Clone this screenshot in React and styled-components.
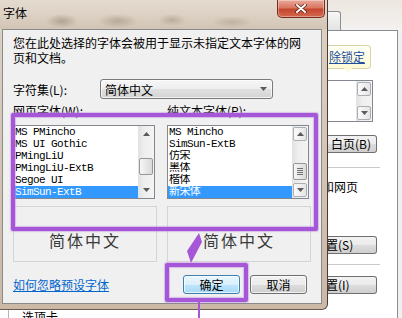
import styled, { createGlobalStyle } from "styled-components";

const GlobalStyle = createGlobalStyle`
  html, body {
    margin: 0;
    padding: 0;
  }
  body {
    font-family: "Noto Sans CJK SC", "Liberation Sans", sans-serif;
    font-size: 12px;
    color: #000;
  }
  * {
    box-sizing: border-box;
  }
`;

const Screen = styled.div`
  position: relative;
  width: 402px;
  height: 318px;
  overflow: hidden;
  display: flex;
  background: #f0f0f0;
`;

/* ---------- dialog ---------- */

const LeftColumn = styled.div`
  width: 328px;
  flex: none;
  display: flex;
  flex-direction: column;
  position: relative;
  z-index: 1;
  background: #fff;
`;

const Dialog = styled.div`
  height: 310px;
  flex: none;
  display: flex;
  flex-direction: column;
  background: linear-gradient(to bottom, #ddd2c5, #cbb8a6);
  border-right: 1px solid #4a3c33;
  border-bottom: 1px solid #6d5a4c;
  border-bottom-right-radius: 6px;
`;

const TitleBar = styled.div`
  height: 29px;
  flex: none;
  display: flex;
  align-items: flex-start;
  justify-content: space-between;
  padding: 0 2px 0 3px;
  background:
    radial-gradient(ellipse 16px 7px at 62px 21px, rgba(110, 88, 66, 0.35), transparent),
    radial-gradient(ellipse 20px 7px at 118px 21px, rgba(110, 88, 66, 0.3), transparent),
    radial-gradient(ellipse 14px 6px at 172px 20px, rgba(110, 88, 66, 0.28), transparent),
    radial-gradient(ellipse 20px 6px at 232px 22px, rgba(110, 88, 66, 0.22), transparent),
    linear-gradient(to bottom, #e4dbd0 0%, #dbcfc1 60%, #d2c4b4 100%);
`;

const Title = styled.span`
  margin-top: 6px;
  line-height: 14px;
`;

const CloseButton = styled.div`
  width: 48px;
  height: 18px;
  display: flex;
  align-items: center;
  justify-content: center;
  border: 1px solid #7a2a1c;
  border-top: none;
  border-radius: 0 0 5px 5px;
  background: linear-gradient(
    to bottom,
    #eaa999 0%,
    #d97762 45%,
    #c4462e 55%,
    #d3694f 100%
  );
  box-shadow: inset 0 0 0 1px rgba(255, 255, 255, 0.35);
`;

const FrameBody = styled.div`
  flex: 1;
  display: flex;
  padding: 0 5px 5px 2px;
`;

const Client = styled.div`
  flex: 1;
  display: flex;
  flex-direction: column;
  padding: 5px 10px 0 10px;
  background: #f0f0f0;
  border: 1px solid #8a8a8a;
`;

const Description = styled.p`
  margin: 0;
  line-height: 15px;
`;

const CharsetRow = styled.div`
  margin-top: 14px;
  height: 20px;
  display: flex;
  align-items: center;
`;

const CharsetLabel = styled.span`
  width: 87px;
  flex: none;
`;

const Combo = styled.div`
  width: 173px;
  height: 20px;
  display: flex;
  align-items: center;
  justify-content: space-between;
  padding: 0 5px 0 4px;
  border: 1px solid #7a7a7a;
  border-radius: 3px;
  background: linear-gradient(
    to bottom,
    #f6f6f6 0%,
    #eeeeee 50%,
    #e0e0e0 50%,
    #d4d4d4 100%
  );
  box-shadow: inset 0 0 0 1px rgba(255, 255, 255, 0.7);
`;

const FontGrid = styled.div`
  display: grid;
  grid-template-columns: 144px 144px;
  column-gap: 10px;
`;

const FieldLabel = styled.span`
  margin-top: 5px;
  height: 14px;
  line-height: 14px;
`;

const ListBox = styled.div`
  margin-top: 7px;
  width: 142px;
  height: 74px;
  display: flex;
  background: #fff;
  border: 1px solid #828790;
`;

const Items = styled.div`
  flex: 1;
  min-width: 0;
  display: flex;
  flex-direction: column;
`;

const Item = styled.div`
  height: 12px;
  line-height: 12px;
  padding-left: 1px;
  white-space: nowrap;
  overflow: hidden;
  font-family: "Liberation Mono", "Noto Sans CJK SC", monospace;
  font-size: 11px;
  letter-spacing: -0.6px;
  color: ${(p) => (p.$selected ? "#fff" : "#000")};
  background: ${(p) => (p.$selected ? "#3399ff" : "transparent")};
`;

const ScrollBar = styled.div`
  width: 16px;
  flex: none;
  display: flex;
  flex-direction: column;
  background: linear-gradient(to right, #e2e2e2, #eeeeee 40%, #f4f4f4);
`;

const ScrollButton = styled.div`
  height: 14px;
  margin: 1px;
  flex: none;
  display: flex;
  align-items: center;
  justify-content: center;
  border: 1px solid ${(p) => (p.$framed ? "#a9afb5" : "transparent")};
  border-radius: 2px;
  background: ${(p) =>
    p.$framed ? "linear-gradient(to right, #fbfbfb, #e4e4e4)" : "transparent"};
`;

const Track = styled.div`
  flex: 1;
  display: flex;
  flex-direction: column;
`;

const Thumb = styled.div`
  margin: ${(p) => p.$offset}px 1px 0;
  height: ${(p) => p.$size}px;
  display: flex;
  flex-direction: column;
  align-items: center;
  justify-content: center;
  gap: 1px;
  border: 1px solid #979797;
  border-radius: 2px;
  background: linear-gradient(to right, #f6f6f6, #dadada);
`;

const Grip = styled.span`
  width: 6px;
  height: 1px;
  background: #6f6f6f;
`;

const Preview = styled.div`
  margin-top: 7px;
  height: 56px;
  padding-top: 23px;
  text-align: center;
  line-height: 20px;
  font-size: 16px;
  letter-spacing: 2px;
  color: #3a3a3a;
  border: 1px solid #d4d4d4;
`;

const BottomRow = styled.div`
  margin-top: 13px;
  height: 19px;
  display: flex;
  align-items: center;
  justify-content: space-between;
  padding-right: 4px;
`;

const HelpLink = styled.a`
  color: #0066cc;
  text-decoration: underline;
  line-height: 14px;
`;

const ButtonGroup = styled.div`
  display: flex;
  gap: 10px;
`;

const Button = styled.div`
  width: 57px;
  height: 19px;
  display: flex;
  align-items: center;
  justify-content: center;
  border: 1px solid ${(p) => (p.$default ? "#3c7fb1" : "#707070")};
  border-radius: 3px;
  background: ${(p) =>
    p.$default
      ? "linear-gradient(to bottom, #eaf6fd 0%, #d9f0fc 50%, #bee6fd 50%, #a7d9f5 100%)"
      : "linear-gradient(to bottom, #f2f2f2 0%, #ebebeb 50%, #dddddd 50%, #cfcfcf 100%)"};
  box-shadow: inset 0 0 0 1px rgba(255, 255, 255, 0.7);
`;

const UnderStrip = styled.div`
  flex: 1;
  padding-left: 8px;
  overflow: hidden;
  background: #fff;
`;

const GroupEdge = styled.div`
  height: 100%;
  padding-left: 13px;
  line-height: 14px;
  border-left: 1px solid #b5b5b5;
`;

/* ---------- window behind the dialog ---------- */

const SidePane = styled.div`
  flex: 1;
  display: flex;
  flex-direction: column;
  overflow: hidden;
  background: #f0f0f0;
`;

const TabStrip = styled.div`
  height: 30px;
  flex: none;
  display: flex;
  align-items: flex-end;
  background: linear-gradient(to bottom, #ece6df, #f3f2f0);
`;

const Tab = styled.div`
  width: 13px;
  height: 19px;
  border: 1px solid #8e8f8f;
  border-left: none;
  border-bottom: none;
  border-radius: 0 3px 0 0;
  background: linear-gradient(to bottom, #f7f7f7, #e3e3e3);
`;

const TabPanel = styled.div`
  flex: 1;
  margin-right: 4px;
  display: flex;
  flex-direction: column;
  align-items: flex-start;
  background: #fff;
  border-top: 1px solid #898c95;
  border-right: 1px solid #898c95;
`;

const Balloon = styled.div`
  position: relative;
  margin-top: 14px;
  width: 43px;
  height: 24px;
  padding-left: 1px;
  line-height: 22px;
  border: 1px solid #d8d4a8;
  border-left: none;
  border-radius: 0 4px 4px 0;
  background: linear-gradient(to bottom, #fffff6, #fcfad6);

  &::after {
    content: "";
    position: absolute;
    left: 16px;
    bottom: -5px;
    border-left: 4px solid transparent;
    border-right: 4px solid transparent;
    border-top: 5px solid #fcfad6;
  }
`;

const UnlockLink = styled.span`
  color: #1f4f9e;
  text-decoration: underline;
`;

const SideList = styled.div`
  margin-top: 11px;
  width: 45px;
  height: 42px;
  display: flex;
  justify-content: flex-end;
  border: 1px solid #828790;
  border-left: none;
`;

const SideButton = styled.div`
  margin-top: ${(p) => p.$gap}px;
  width: 49px;
  height: 18px;
  padding-left: 3px;
  line-height: 16px;
  white-space: nowrap;
  overflow: hidden;
  text-indent: ${(p) => p.$cut || 0}px;
  border: 1px solid #707070;
  border-left: none;
  border-radius: 0 3px 3px 0;
  background: linear-gradient(
    to bottom,
    #f2f2f2 0%,
    #ebebeb 50%,
    #dddddd 50%,
    #cfcfcf 100%
  );
`;

const Separator = styled.div`
  margin-top: ${(p) => p.$gap}px;
  width: 52px;
  height: 1px;
  background: #c9c9c9;
`;

const SideText = styled.div`
  margin-top: 12px;
  line-height: 14px;
  white-space: nowrap;
  text-indent: -6px;
`;

/* ---------- annotation overlay ---------- */

const Highlight = styled.div`
  position: absolute;
  z-index: 2;
  left: ${(p) => p.$x}px;
  top: ${(p) => p.$y}px;
  width: ${(p) => p.$w}px;
  height: ${(p) => p.$h}px;
  border: 4px solid #a557d8;
  border-radius: 2px;
  box-shadow: 0 0 1px 1px rgba(190, 140, 230, 0.5),
    inset 0 0 1px 1px rgba(190, 140, 230, 0.5);
  pointer-events: none;
`;

const Pointer = styled.svg`
  position: absolute;
  z-index: 2;
  left: 184px;
  top: 232px;
`;

const Leader = styled.div`
  position: absolute;
  z-index: 2;
  left: 198px;
  top: 302px;
  width: 2px;
  height: 16px;
  background: #a557d8;
`;

const Arrow = ({ up }) => (
  <svg width="7" height="4" viewBox="0 0 7 4">
    <path d={up ? "M0 4 L3.5 0 L7 4 Z" : "M0 0 L7 0 L3.5 4 Z"} fill="#5a5a5a" />
  </svg>
);

const Scroll = ({ framed, thumb, grip }) => (
  <ScrollBar>
    <ScrollButton $framed={framed}>
      <Arrow up />
    </ScrollButton>
    <Track>
      {thumb && (
        <Thumb $offset={thumb.offset} $size={thumb.size}>
          {grip && (
            <>
              <Grip />
              <Grip />
              <Grip />
              <Grip />
            </>
          )}
        </Thumb>
      )}
    </Track>
    <ScrollButton $framed={framed}>
      <Arrow />
    </ScrollButton>
  </ScrollBar>
);

const webFonts = ["MS PMincho", "MS UI Gothic", "PMingLiU", "PMingLiU-ExtB", "Segoe UI", "SimSun-ExtB"];
const textFonts = ["MS Mincho", "SimSun-ExtB", "仿宋", "黑体", "楷体", "新宋体"];

const App = () => {
  return (
    <Screen>
      <GlobalStyle />
      <LeftColumn>
        <Dialog>
          <TitleBar>
            <Title>字体</Title>
            <CloseButton>
              <svg width="12" height="9" viewBox="0 0 12 9">
                <path
                  d="M2 1 L10 8 M10 1 L2 8"
                  stroke="#5a1a10"
                  strokeWidth="3.4"
                  strokeLinecap="round"
                />
                <path
                  d="M2 1 L10 8 M10 1 L2 8"
                  stroke="#fff"
                  strokeWidth="2"
                  strokeLinecap="round"
                />
              </svg>
            </CloseButton>
          </TitleBar>
          <FrameBody>
            <Client>
              <Description>
                您在此处选择的字体会被用于显示未指定文本字体的网
                <br />
                页和文档。
              </Description>
              <CharsetRow>
                <CharsetLabel>字符集(L):</CharsetLabel>
                <Combo>
                  <span>简体中文</span>
                  <Arrow />
                </Combo>
              </CharsetRow>
              <FontGrid>
                <FieldLabel>网页字体(W):</FieldLabel>
                <FieldLabel>纯文本字体(P):</FieldLabel>
                <ListBox>
                  <Items>
                    {webFonts.map((f, i) => (
                      <Item key={f} $selected={i === webFonts.length - 1}>
                        {f}
                      </Item>
                    ))}
                  </Items>
                  <Scroll thumb={{ offset: 16, size: 17 }} />
                </ListBox>
                <ListBox>
                  <Items>
                    {textFonts.map((f, i) => (
                      <Item key={f} $selected={i === textFonts.length - 1}>
                        {f}
                      </Item>
                    ))}
                  </Items>
                  <Scroll framed grip thumb={{ offset: 21, size: 17 }} />
                </ListBox>
                <Preview>简体中文</Preview>
                <Preview>简体中文</Preview>
              </FontGrid>
              <BottomRow>
                <HelpLink>如何忽略预设字体</HelpLink>
                <ButtonGroup>
                  <Button $default>确定</Button>
                  <Button>取消</Button>
                </ButtonGroup>
              </BottomRow>
            </Client>
          </FrameBody>
        </Dialog>
        <UnderStrip>
          <GroupEdge>选项卡</GroupEdge>
        </UnderStrip>
      </LeftColumn>

      <SidePane>
        <TabStrip>
          <Tab />
        </TabStrip>
        <TabPanel>
          <Balloon>
            <UnlockLink>除锁定</UnlockLink>
          </Balloon>
          <SideList>
            <Scroll framed />
          </SideList>
          <SideButton $gap={13}>白页(B)</SideButton>
          <Separator $gap={14} />
          <SideText>和网页</SideText>
          <SideButton $gap={42} $cut={-5}>
            置(S)
          </SideButton>
          <Separator $gap={10} />
          <SideButton $gap={11} $cut={-5}>
            置(I)
          </SideButton>
        </TabPanel>
      </SidePane>

      <Highlight $x={11} $y={113} $w={307} $h={118} />
      <Highlight $x={165} $y={263} $w={83} $h={39} />
      <Pointer width="22" height="34" viewBox="0 0 22 34">
        <polygon points="15,1 18,10 7,31 3,19" fill="#a557d8" />
      </Pointer>
      <Leader />
    </Screen>
  );
};

export default App;
